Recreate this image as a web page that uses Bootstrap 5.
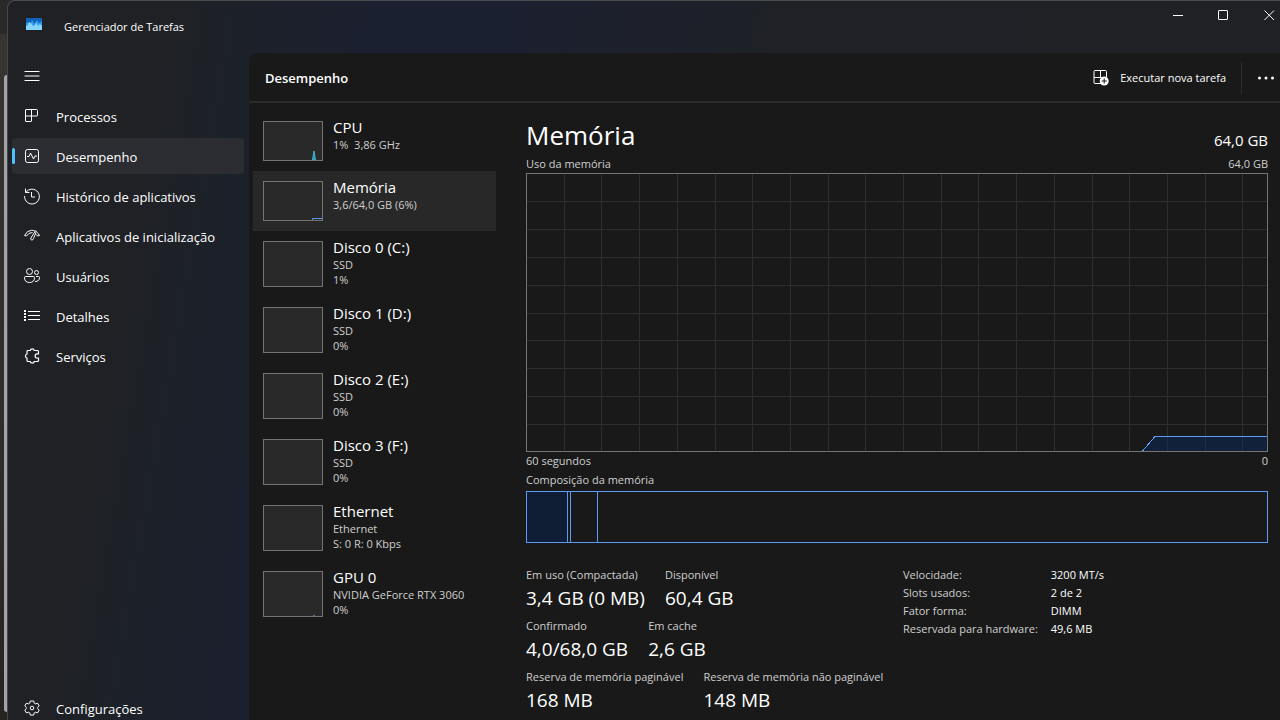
<!DOCTYPE html>
<html lang="pt-BR" data-bs-theme="dark">
<head>
<meta charset="utf-8">
<meta name="viewport" content="width=device-width, initial-scale=1">
<title>Gerenciador de Tarefas</title>
<link href="https://cdn.jsdelivr.net/npm/bootstrap@5.3.0/dist/css/bootstrap.min.css" rel="stylesheet">
<style>
  :root { --panel: #191919; --line: #2b2b2b; --soft: #cfcfcf; --mem: #5c9bf5; --mem-fill: #0f1e35; }
  body { font-family: "Open Sans", "Noto Sans", sans-serif; font-size: 13px; line-height: 20px; color: #fff; background: #2b2a28; }
  button, a { color: inherit; text-decoration: none; }
  a:hover { color: inherit; }
  svg { display: block; flex: none; }
  .ico { width: 16px; height: 16px; fill: none; stroke: #fff; stroke-width: 1; overflow: visible; }
  .plain { background: none; border: 0; padding: 0; text-align: left; }

  .desk { flex: 0 0 7px; padding: 75px 0 8px 4px; background: linear-gradient(#292929 34px, #363530 34px, #2b2924 80%, #26241f); }
  .desk-sheet { flex: 1; background: #a2a4a8; border-radius: 8px 0 0 8px; }
  .tm-window { min-width: 0; border-top: 1px solid #4b4c4c; border-left: 1px solid #46474a; border-top-left-radius: 8px;
    background: linear-gradient(100deg, #202124 130px, #1d2128 220px, #1b2030 360px, #1b2030 500px, #1f2127 760px, #202124 100%); }
  .titlebar { flex: none; height: 52px; gap: 22px; font-size: 11px; padding-left: 18px; }
  .app-ico { width: 16px; height: 12px; margin-top: 17px; }
  .controls { gap: 30px; padding: 6px 3px 0 0; }

  .side { flex: 0 0 241px; padding: 5px 5px 0 4px; gap: 4px; }
  .side-item { display: flex; align-items: center; gap: 16px; height: 36px; padding: 2px 12px 0; border-radius: 4px; position: relative; white-space: nowrap; }
  .side-item > svg { margin-top: -2px; }
  .side-item.active { background: #2c2d32; }
  .side-item.active::before { content: ""; position: absolute; left: 0; top: 10px; width: 3px; height: 16px; border-radius: 2px; background: #4cc2ff; }
  .side-item.last { height: 24px; }

  .main { min-width: 0; background: var(--panel); border-top-left-radius: 8px; }
  .head { flex: none; height: 50px; padding: 2px 6px 0 16px; border-bottom: 2px solid var(--line); }
  .head h1 { font-size: 13px; font-weight: 600; line-height: 20px; }
  .run { font-size: 11px; gap: 11px; }
  .rule { width: 1px; height: 32px; margin: 0 16px 0 15px; background: #2e2e2e; }

  .res-list { flex: 0 0 247px; padding: 8px 0 0 4px; }
  .res { display: flex; gap: 10px; width: 100%; padding: 10px; font-size: 11px; line-height: 15px; color: var(--soft); white-space: nowrap; }
  .res.active { background: #282828; }
  .thumb { width: 60px; height: 46px; border: 1px solid #747474; background: #292929; }
  .thumb.short { height: 40px; }
  .res-text { height: 46px; margin-top: -4px; }
  .short + .res-text { height: 40px; }
  .res-name { display: block; font-size: 15px; line-height: 21px; margin-bottom: -1px; color: #fff; }

  .detail { min-width: 0; padding: 12px 12px 0 30px; font-size: 11px; line-height: 18px; color: var(--soft); }
  .detail h2 { font-size: 26px; line-height: 40px; font-weight: 400; color: #fff; }
  .total { font-size: 15px; line-height: 30px; color: #fff; }
  .chart { width: 100%; height: 279px; border: 1px solid #747474; }
  .chart path { vector-effect: non-scaling-stroke; }
  .comp-label { line-height: 20px; margin-bottom: 1px; }
  .comp { height: 52px; border: 1px solid var(--mem); }
  .comp > div { border-right: 1px solid var(--mem); }
  .comp > .used { background: var(--mem-fill); }
  .stats { margin-top: 23px; }
  .stats-big { flex: 0 0 377px; white-space: nowrap; }
  .stats-big > div { display: flex; gap: 20px; height: 51px; }
  .stats dl, .stats dd, .stats dt { margin: 0; font-weight: 400; }
  .stats-big dd { font-size: 19px; line-height: 28px; color: #fff; }
  .specs th { font-weight: 400; padding: 0 13px 0 0; }
  .specs td { padding: 0; color: #fff; }
  .specs th, .specs td { white-space: nowrap; }
</style>
</head>
<body>
<div class="d-flex vh-100 overflow-hidden">
  <div class="desk d-flex"><div class="desk-sheet"></div></div>

  <div class="tm-window d-flex flex-column flex-grow-1">
    <header class="titlebar d-flex">
      <svg class="app-ico" viewBox="0 0 16 12"><path fill="#1063bd" d="M0 0h16v12H0z"/><path fill="#2f9be8" d="M0 5l2-1 2 3 2-5 3 4 2-4 2 3 3-2v9H0z"/><path fill="#85d6fb" d="M0 8l2-1 1-3 2 1 2 3 2-1 1-3 2 4 2-2 2 2v4H0z"/></svg>
      <span class="mt-3">Gerenciador de Tarefas</span>
      <div class="controls d-flex align-items-start ms-auto">
        <button class="plain" aria-label="Minimizar"><svg class="ico" viewBox="0 0 16 16"><path d="M4 8.500h10"/></svg></button>
        <button class="plain" aria-label="Maximizar"><svg class="ico" viewBox="0 0 16 16"><rect x="3.500" y="3.500" width="9" height="9" rx=".5"/></svg></button>
        <button class="plain" aria-label="Fechar"><svg class="ico" viewBox="0 0 16 16"><path d="M3.500 3.500l9.500 9.500M13 3.500L3.500 13"/></svg></button>
      </div>
    </header>

    <div class="d-flex flex-grow-1">
      <nav class="side d-flex flex-column">
        <button class="plain side-item px-2 ms-1" aria-label="Menu"><svg class="ico" viewBox="0 0 16 16"><path d="M.5 3.500h15M.5 8h15M.5 12.500h15"/></svg></button>
        <a class="side-item" href="#"><svg class="ico" viewBox="0 0 16 16"><path d="M2 1.500h10.500q1 0 1 1v5q0 .5-.5.5H7.500v5q0 .5-.5.5H2q-.5 0-.5-.5V2q0-.5.5-.5zM7.500 1.500V8M1.500 8h6"/></svg>Processos</a>
        <a class="side-item active" href="#" aria-current="page"><svg class="ico" viewBox="0 0 16 16"><rect x="1.500" y="1.500" width="13" height="13" rx="2"/><path d="M3 8.500h2L6.500 5l3 6L11 8h2"/></svg>Desempenho</a>
        <a class="side-item" href="#"><svg class="ico" viewBox="0 0 16 16"><path d="M1.500 .5v4h4M1.800 4.500A7.400 7.400 0 1 1 .6 8M7.500 4v5H11"/></svg>Histórico de aplicativos</a>
        <a class="side-item" href="#"><svg class="ico" viewBox="0 0 16 16"><path d="M.5 7.500Q3 2.300 7.500 2.300q2 0 3.500.8M.5 7.500l2 .5Q4.500 4.500 8.500 4.500M11.500 2.800L6.800 10q-.4 2 1 2t1.700-1.500l3-7.200zM13 4.500q1.800 1.300 2.500 3l-2 .5L12.500 6.500"/></svg>Aplicativos de inicialização</a>
        <a class="side-item" href="#"><svg class="ico" viewBox="0 0 16 16"><circle cx="5.500" cy="3.500" r="3"/><circle cx="12.500" cy="4.500" r="2"/><path d="M1.500 8.500h8q1 0 1 1 0 5-5 5t-5-5q0-1 1-1zM12 8.500h2.500q1 0 1 1 0 4-4.500 4"/></svg>Usuários</a>
        <a class="side-item" href="#"><svg class="ico" viewBox="0 0 16 16"><path d="M4 3.500h12M4 7.500h12M4 11.500h12"/><path stroke-width="2" stroke-dasharray="2 1" d="M1 2v11"/></svg>Detalhes</a>
        <a class="side-item" href="#"><svg class="ico" viewBox="0 0 16 16"><path stroke-width="1.200" d="M4 2.500h2.200a2.100 2.100 0 0 1 4.100 0h3.200q1 0 1 1v2.300h-1.300a2 2 0 0 0 0 4.200h1.300v2.500q0 1-1 1h-3.200a2.100 2.100 0 0 1-4.100 0H4q-1 0-1-1v-2.300a2.200 2.200 0 0 1 0-4.200V3.500q0-1 1-1z"/></svg>Serviços</a>
        <a class="side-item last mt-auto" href="#"><svg class="ico" viewBox="0 0 16 16"><path d="M6.300 1h3.400l.5 2.200 1.200.7 2.200-.7 1.600 2.800L13.600 7.500v1l1.600 1.600-1.600 2.800-2.200-.7-1.200.7-.5 2.200H6.300l-.5-2.200-1.200-.7-2.200.7L.8 10.100l1.600-1.600v-1L.8 6l1.600-2.800 2.200.7 1.200-.7z" stroke-linejoin="round"/><circle cx="8" cy="8" r="1.800"/></svg>Configurações</a>
      </nav>

      <main class="main flex-grow-1 d-flex flex-column">
        <div class="head d-flex align-items-center">
          <h1 class="m-0 me-auto">Desempenho</h1>
          <button class="plain run d-flex align-items-center"><svg class="ico" viewBox="0 0 16 16"><path d="M8 13.500H2q-1 0-1-1V1.500q0-1 1-1h10.500q1 0 1 1V7M7.500 .5v7M1 7.500h8"/><circle cx="11.200" cy="11" r="4.500" fill="#fff" stroke="none"/><path stroke="#191919" d="M11.200 8.500v5M8.700 11h5"/></svg>Executar nova tarefa</button>
          <div class="rule"></div>
          <button class="plain" aria-label="Mais opções"><svg class="ico" viewBox="0 0 16 16"><g fill="#fff" stroke="none"><circle cx="1.500" cy="8" r="1.500"/><circle cx="8" cy="8" r="1.500"/><circle cx="14.500" cy="8" r="1.500"/></g></svg></button>
        </div>

        <div class="d-flex flex-grow-1">
          <div class="res-list">
            <button class="plain res"><svg class="thumb short" viewBox="0 0 58 38"><path d="M48.500 38L50 29l1.500 9z" fill="#2f8fa8" stroke="#3fb4d4"/></svg><span class="res-text"><span class="res-name">CPU</span>1%&nbsp; 3,86 GHz</span></button>
            <button class="plain res active"><svg class="thumb short" viewBox="0 0 58 38"><path d="M48.500 38v-1.500H58" fill="none" stroke="#5c9bf5"/></svg><span class="res-text"><span class="res-name">Memória</span>3,6/64,0 GB (6%)</span></button>
            <button class="plain res"><svg class="thumb"></svg><span class="res-text"><span class="res-name">Disco 0 (C:)</span>SSD<br>1%</span></button>
            <button class="plain res"><svg class="thumb"></svg><span class="res-text"><span class="res-name">Disco 1 (D:)</span>SSD<br>0%</span></button>
            <button class="plain res"><svg class="thumb"></svg><span class="res-text"><span class="res-name">Disco 2 (E:)</span>SSD<br>0%</span></button>
            <button class="plain res"><svg class="thumb"></svg><span class="res-text"><span class="res-name">Disco 3 (F:)</span>SSD<br>0%</span></button>
            <button class="plain res"><svg class="thumb"></svg><span class="res-text"><span class="res-name">Ethernet</span>Ethernet<br>S: 0 R: 0 Kbps</span></button>
            <button class="plain res"><svg class="thumb" viewBox="0 0 58 44"><path d="M49 43h2v1h-2z" fill="#8a4fa0"/></svg><span class="res-text"><span class="res-name">GPU 0</span>NVIDIA GeForce RTX 3060<br>0%</span></button>
          </div>

          <section class="detail flex-grow-1">
            <div class="d-flex justify-content-between align-items-end"><h2 class="m-0">Memória</h2><span class="total">64,0 GB</span></div>
            <div class="d-flex justify-content-between"><span>Uso da memória</span><span>64,0 GB</span></div>
            <svg class="chart" viewBox="0 0 740 277" preserveAspectRatio="none" shape-rendering="crispEdges">
              <path id="grid" fill="none" stroke="#2e2e2e"/>
              <path d="M615.500 277L628 262.500H740V277z" fill="#0b2a5c" fill-opacity=".5"/>
              <path d="M615.500 277L628 262.500H740" fill="none" stroke="#5c9bf5"/>
            </svg>
            <div class="d-flex justify-content-between"><span>60 segundos</span><span>0</span></div>
            <div class="comp-label">Composição da memória</div>
            <div class="comp d-flex">
              <div class="used" style="width:5.6%"></div><div style="width:.3%"></div><div style="width:3.7%"></div>
            </div>
            <div class="stats d-flex">
              <div class="stats-big">
                <div><dl><dt>Em uso (Compactada)</dt><dd>3,4 GB (0 MB)</dd></dl><dl><dt>Disponível</dt><dd>60,4 GB</dd></dl></div>
                <div><dl><dt>Confirmado</dt><dd>4,0/68,0 GB</dd></dl><dl><dt>Em cache</dt><dd>2,6 GB</dd></dl></div>
                <div><dl><dt>Reserva de memória paginável</dt><dd>168 MB</dd></dl><dl><dt>Reserva de memória não paginável</dt><dd>148 MB</dd></dl></div>
              </div>
              <table class="specs align-self-start">
                <tr><th scope="row">Velocidade:</th><td>3200 MT/s</td></tr>
                <tr><th scope="row">Slots usados:</th><td>2 de 2</td></tr>
                <tr><th scope="row">Fator forma:</th><td>DIMM</td></tr>
                <tr><th scope="row">Reservada para hardware:</th><td>49,6 MB</td></tr>
              </table>
            </div>
          </section>
        </div>
      </main>
    </div>
  </div>
</div>
<script src="https://cdn.jsdelivr.net/npm/bootstrap@5.3.0/dist/js/bootstrap.bundle.min.js"></script>
<script>
  // Grid: one column every three seconds, one row every ten percent
  let d = '';
  for (let i = 1; i < 20; i++) d += `M${Math.round(i * 37.7) - 0.5} 0V277`;
  for (let i = 1; i < 10; i++) d += `M0 ${Math.round(i * 27.9) - 0.5}H740`;
  document.getElementById('grid').setAttribute('d', d);
</script>
</body>
</html>
